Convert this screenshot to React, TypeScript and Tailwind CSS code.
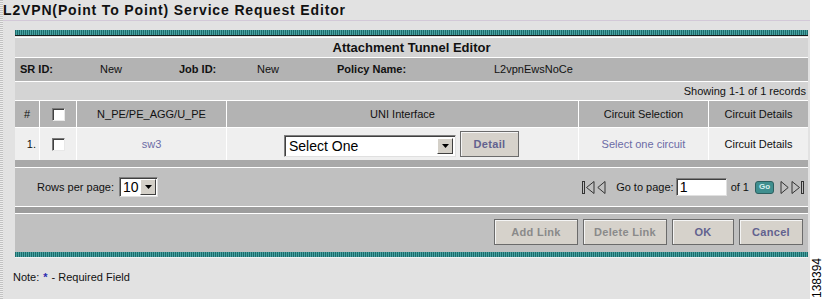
import React from 'react';

const teal = "bg-[repeating-linear-gradient(90deg,#1c6c6c_0px,#1c6c6c_1px,#4aa2a2_1px,#4aa2a2_2px)]";

const Checkbox = () => (
  <span className="inline-block w-[13px] h-[13px] bg-white border border-t-[#7a7a7a] border-l-[#7a7a7a] border-r-[#e8e8e8] border-b-[#e8e8e8] shadow-[inset_1px_1px_0_#404040]" />
);

const DropArrow = ({ h }: { h: string }) => (
  <span className={`flex items-center justify-center w-[16px] ${h} bg-[#d4d0c8] border border-t-white border-l-white border-r-[#404040] border-b-[#404040]`}>
    <svg width="7" height="4" viewBox="0 0 7 4"><path d="M0 0h7L3.5 4z" fill="#000" /></svg>
  </span>
);

const ActionButton = ({ label, width, enabled }: { label: string; width: string; enabled?: boolean }) => (
  <button
    className={`${width} h-[26px] bg-[#d6d2cb] border border-[#6b6b6b] shadow-[inset_1px_1px_0_#f4f4f4] text-[11px] font-bold tracking-[0.3px] ${enabled ? 'text-[#62628f]' : 'text-[#8a8a8a]'}`}
  >
    {label}
  </button>
);

const App = () => {
  return (
    <div className="w-[824px] h-[299px] flex bg-white font-['Liberation_Sans',Arial,sans-serif] text-[11px] text-[#111]">
      <div className="w-[3px] bg-[repeating-linear-gradient(180deg,#c2c2c2_0px,#c2c2c2_1px,#ededed_1px,#ededed_2px)]" />
      <div className="w-[807px] bg-[#e2e2e2] flex flex-col">
        <div className="h-[20px] flex items-center text-[14px] font-bold tracking-[0.85px] text-[#111] leading-none">
          L2VPN(Point To Point) Service Request Editor
        </div>
        <div className="h-px bg-[#d3c9d8]" />
        <div className="h-[9px]" />

        <div className="ml-[12px] w-[793px] flex flex-col">
          <div className={`h-[5px] ${teal}`} />
          <div className="h-px bg-[#1a1a1a]" />
          <div className="h-px bg-[#e6e6e6]" />
          <div className="h-px bg-white" />

          <div className="h-[19px] bg-[#d4d4d4] flex items-center justify-center text-[13px] font-bold">
            Attachment Tunnel Editor
          </div>
          <div className="h-px bg-white" />

          <div className="h-[23px] bg-[#b3b3b3] flex items-center">
            <div className="w-[85px] pl-[5px] font-bold">SR ID:</div>
            <div className="w-[79px]">New</div>
            <div className="w-[78px] font-bold">Job ID:</div>
            <div className="w-[80px]">New</div>
            <div className="w-[157px] font-bold">Policy Name:</div>
            <div>L2vpnEwsNoCe</div>
          </div>
          <div className="h-px bg-white" />

          <div className="h-[18px] bg-[#d4d4d4] flex items-center justify-end pr-[2px]">
            Showing 1-1 of 1 records
          </div>
          <div className="h-px bg-white" />

          <div className="h-[26px] bg-[#b3b3b3] flex">
            <div className="w-[25px] border-r border-white flex items-center justify-center">#</div>
            <div className="w-[37px] border-r border-white flex items-center justify-center"><Checkbox /></div>
            <div className="w-[150px] border-r border-white flex items-center justify-center">N_PE/PE_AGG/U_PE</div>
            <div className="w-[352px] border-r border-white flex items-center justify-center">UNI Interface</div>
            <div className="w-[130px] border-r border-white flex items-center justify-center">Circuit Selection</div>
            <div className="flex-1 flex items-center justify-center">Circuit Details</div>
          </div>
          <div className="h-px bg-white" />

          <div className="h-[32px] bg-[#efefef] flex">
            <div className="w-[25px] border-r border-white flex items-center justify-end pr-[3px] text-[#111]">1.</div>
            <div className="w-[37px] border-r border-white flex items-center justify-center"><Checkbox /></div>
            <div className="w-[150px] border-r border-white flex items-center justify-center text-[#6b6ba6]">sw3</div>
            <div className="w-[352px] border-r border-white flex items-center pl-[57px] gap-[4px]">
              <div className="mt-[4px] w-[172px] h-[22px] bg-white border border-t-[#808080] border-l-[#808080] border-r-[#e0e0e0] border-b-[#e0e0e0] shadow-[inset_1px_1px_0_#404040] flex items-center justify-between pl-[4px] pr-[2px]">
                <span className="text-[14px] text-black">Select One</span>
                <DropArrow h="h-[16px]" />
              </div>
              <button className="w-[59px] h-[26px] bg-[#d6d2cb] border border-[#6b6b6b] shadow-[inset_1px_1px_0_#f4f4f4] text-[11px] font-bold tracking-[0.3px] text-[#62628f]">
                Detail
              </button>
            </div>
            <div className="w-[130px] border-r border-white flex items-center justify-center text-[#6b6ba6]">Select one circuit</div>
            <div className="flex-1 flex items-center justify-center">Circuit Details</div>
          </div>

          <div className="h-[7px] bg-[#a9a9a9]" />
          <div className="h-px bg-white" />

          <div className="h-[38px] bg-[#c0c0c0] flex items-center justify-between pl-[22px] pr-[2px]">
            <div className="flex items-center gap-[5px]">
              <span>Rows per page:</span>
              <div className="w-[39px] h-[20px] bg-white border border-t-[#808080] border-l-[#808080] border-r-[#e0e0e0] border-b-[#e0e0e0] shadow-[inset_1px_1px_0_#404040] flex items-center justify-between pl-[3px] pr-[1px]">
                <span className="text-[14px] text-black">10</span>
                <DropArrow h="h-[16px]" />
              </div>
            </div>
            <div className="flex items-center">
              <svg width="13" height="15" viewBox="0 0 13 15" className="mr-[2px]">
                <rect x="0.5" y="1.5" width="2" height="12" fill="none" stroke="#333" />
                <path d="M12 1.5 L4.5 7.5 L12 13.5 Z" fill="none" stroke="#333" />
              </svg>
              <svg width="9" height="15" viewBox="0 0 9 15" className="mr-[10px]">
                <path d="M8 1.5 L0.8 7.5 L8 13.5 Z" fill="none" stroke="#333" />
              </svg>
              <span className="mr-[2px]">Go to page:</span>
              <div className="w-[51px] h-[18px] bg-white border border-t-[#808080] border-l-[#808080] border-r-[#e0e0e0] border-b-[#e0e0e0] shadow-[inset_1px_1px_0_#404040] flex items-center pl-[3px] mr-[4px]">
                <span className="text-[14px] text-black">1</span>
              </div>
              <span className="mr-[6px]">of 1</span>
              <span className="w-[19px] h-[13px] rounded-[3px] bg-[#3f8f8f] border border-[#2d5f5f] flex items-center justify-center text-[8px] font-bold text-[#d8f0f0] mr-[6px]">
                Go
              </span>
              <svg width="9" height="15" viewBox="0 0 9 15" className="mr-[2px]">
                <path d="M1 1.5 L8.2 7.5 L1 13.5 Z" fill="none" stroke="#333" />
              </svg>
              <svg width="15" height="15" viewBox="0 0 15 15">
                <path d="M1 1.5 L8.5 7.5 L1 13.5 Z" fill="none" stroke="#333" />
                <rect x="10.5" y="1.5" width="2" height="12" fill="none" stroke="#333" />
              </svg>
            </div>
          </div>

          <div className="h-px bg-white" />
          <div className="h-[6px] bg-[#9d9d9d]" />
          <div className="h-px bg-white" />

          <div className="h-[38px] bg-[#c0c0c0] flex items-start justify-end pt-[5px] pr-[5px] gap-[5px]">
            <ActionButton label="Add Link" width="w-[84px]" />
            <ActionButton label="Delete Link" width="w-[84px]" />
            <ActionButton label="OK" width="w-[62px]" enabled />
            <ActionButton label="Cancel" width="w-[64px]" enabled />
          </div>
          <div className={`h-[5px] ${teal}`} />
          <div className="h-px bg-[#f2f2f2]" />
        </div>

        <div className="flex-1 flex items-center pl-[10px] pb-[2px]">
          Note: <span className="text-[#2b2bb0] mx-[4px] font-bold">*</span> - Required Field
        </div>
      </div>
      <div className="flex-1 flex flex-col justify-end items-center pb-[1px]">
        <span className="[writing-mode:vertical-rl] rotate-180 text-[12px] text-black leading-none">138394</span>
      </div>
    </div>
  );
};

export default App;
